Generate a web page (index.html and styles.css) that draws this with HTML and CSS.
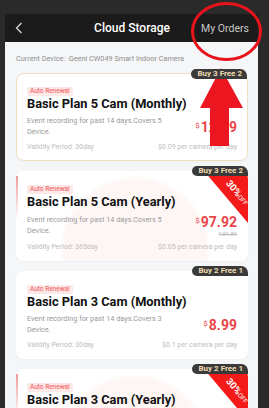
FILE: index.html
```html
<!DOCTYPE html>
<html lang="en">
<head>
  <meta charset="UTF-8" />
  <meta name="viewport" content="width=device-width, initial-scale=1.0"/>
  <title>Cloud Storage</title>
  <link rel="stylesheet" href="styles.css">
</head>
<body>
  <div class="screen">
    <div class="topbar">
      <svg class="back" width="8" height="12" viewBox="0 0 8 12"><path d="M6.5 1 L1.5 6 L6.5 11" fill="none" stroke="#d8d8d8" stroke-width="1.3"/></svg>
      <h1>Cloud Storage</h1>
      <a class="orders">My Orders</a>
    </div>
    <div class="content">
      <p class="device">Current Device:&nbsp; Geeni CW049 Smart Indoor Camera</p>

      <div class="plan selected">
        <span class="tag">Buy 3 Free 2</span>
        <span class="renew">Auto Renewal</span>
        <h2>Basic Plan 5 Cam (Monthly)</h2>
        <div class="plan-body">
          <p class="desc">Event recording for past 14 days.Covers 5<br>Device.</p>
          <div class="price-box">
            <div class="price"><span class="cur">$</span>12.99</div>
          </div>
        </div>
        <div class="plan-foot">
          <span>Validity Period: 30day</span>
          <span>$0.09 per camera per day</span>
        </div>
      </div>

      <div class="plan yearly">
        <div class="corner"><span><b>30%</b>OFF</span></div>
        <span class="tag">Buy 3 Free 2</span>
        <span class="renew">Auto Renewal</span>
        <h2>Basic Plan 5 Cam (Yearly)</h2>
        <div class="plan-body">
          <p class="desc">Event recording for past 14 days.Covers 5<br>Device.</p>
          <div class="price-box">
            <div class="price"><span class="cur">$</span>97.92</div>
            <div class="was">139.89</div>
          </div>
        </div>
        <div class="plan-foot">
          <span>Validity Period: 365day</span>
          <span>$0.05 per camera per day</span>
        </div>
      </div>

      <div class="plan">
        <span class="tag">Buy 2 Free 1</span>
        <span class="renew">Auto Renewal</span>
        <h2>Basic Plan 3 Cam (Monthly)</h2>
        <div class="plan-body">
          <p class="desc">Event recording for past 14 days.Covers 3<br>Device.</p>
          <div class="price-box">
            <div class="price"><span class="cur">$</span>8.99</div>
          </div>
        </div>
        <div class="plan-foot">
          <span>Validity Period: 30day</span>
          <span>$0.1 per camera per day</span>
        </div>
      </div>

      <div class="plan yearly">
        <div class="corner"><span><b>30%</b>OFF</span></div>
        <span class="tag">Buy 2 Free 1</span>
        <span class="renew">Auto Renewal</span>
        <h2>Basic Plan 3 Cam (Yearly)</h2>
        <div class="plan-body">
          <p class="desc">Event recording for past 14 days.Covers 3<br>Device.</p>
          <div class="price-box">
            <div class="price"><span class="cur">$</span>62.92</div>
            <div class="was">89.89</div>
          </div>
        </div>
        <div class="plan-foot">
          <span>Validity Period: 365day</span>
          <span>$0.06 per camera per day</span>
        </div>
      </div>
    </div>
  </div>

  <!-- red markup drawn on top of the screenshot -->
  <svg class="markup" width="269" height="408" viewBox="0 0 269 408">
    <ellipse cx="226.5" cy="31.5" rx="34" ry="28" fill="none" stroke="#e8131b" stroke-width="3"/>
    <polygon points="221,68 200,108 210,108 210,146 229,146 229,108 243,108" fill="#ec1620"/>
  </svg>
</body>
</html>
```

FILE: styles.css
```css
body { margin: 0; width: 269px; height: 408px; overflow: hidden; position: relative; background: #2a2a2a; font-family: Roboto, "Noto Sans", sans-serif; }
.screen { margin: 14px 0 0 5px; width: 253px; height: 394px; overflow: hidden; background: #f5f6f8; }

.topbar { height: 28px; background: #1b1b1b; display: grid; grid-template-columns: 1fr auto 1fr; align-items: center; padding: 0 9px 0 10px; }
.back { display: block; }
.topbar h1 { margin: 0; font-size: 12px; font-weight: 500; color: #fff; }
.orders { justify-self: end; font-size: 10.5px; color: #c9c9c9; }

.content { padding: 11px 10px 0 11px; }
.device { margin: 0 0 8px; font-size: 7.3px; line-height: 12px; color: #8f8f8f; white-space: nowrap; }

.plan { position: relative; background: #fff; border-radius: 8px; padding: 14px 11px 8px 11px; margin-bottom: 10px; box-shadow: 0 1px 3px rgba(0,0,0,0.03); }
.plan.selected { border: 1px solid #efdfbf; padding: 13px 10px 7px 10px; }
.plan.yearly { background: radial-gradient(circle at 119px 80px, #fef5f5 0, #fef5f5 70px, #fff 76px); }
.plan.yearly::before { content: ""; position: absolute; left: 0; top: 5px; width: 1.5px; height: 44px; background: linear-gradient(#f09a9a, rgba(240,154,154,0)); }

.tag { position: absolute; top: -5px; right: 0; z-index: 2; background: #3a3a3a; color: #f0dab0; font-size: 8px; font-weight: 700; line-height: 10px; padding: 0 5px 0 6px; border-radius: 6px 8px 0 6px; }
.corner { position: absolute; top: 0; right: 0; width: 44px; height: 52px; background: #f41a1a; border-top-right-radius: 8px; clip-path: polygon(0 0, 100% 0, 100% 100%); }
.corner span { position: absolute; right: -5px; top: 16px; transform: rotate(50deg); color: #fff; font-size: 6.5px; white-space: nowrap; }
.corner b { font-size: 9.5px; }

.renew { display: block; width: max-content; font-size: 6.5px; line-height: 9px; padding: 0 3px; background: #fde8e8; color: #ef5257; border-radius: 2px; }
.plan h2 { margin: 0 0 4px; font-size: 12.8px; line-height: 15px; font-weight: 700; color: #111; }

.plan-body { display: flex; justify-content: space-between; align-items: center; }
.desc { margin: 0; white-space: nowrap; font-size: 7.3px; line-height: 11px; color: #9a9a9a; }
.price-box { text-align: right; }
.price { font-size: 14px; font-weight: 700; line-height: 16px; color: #e9464a; }
.cur { font-size: 8px; font-weight: 400; vertical-align: 4px; margin-right: 1px; }
.was { font-size: 6px; line-height: 7px; color: #bbb; text-decoration: line-through; }
.plan-foot { display: flex; justify-content: space-between; margin-top: 5px; font-size: 7px; line-height: 11px; color: #bdbdbd; white-space: nowrap; }

.markup { position: absolute; top: 0; left: 0; pointer-events: none; }
```
